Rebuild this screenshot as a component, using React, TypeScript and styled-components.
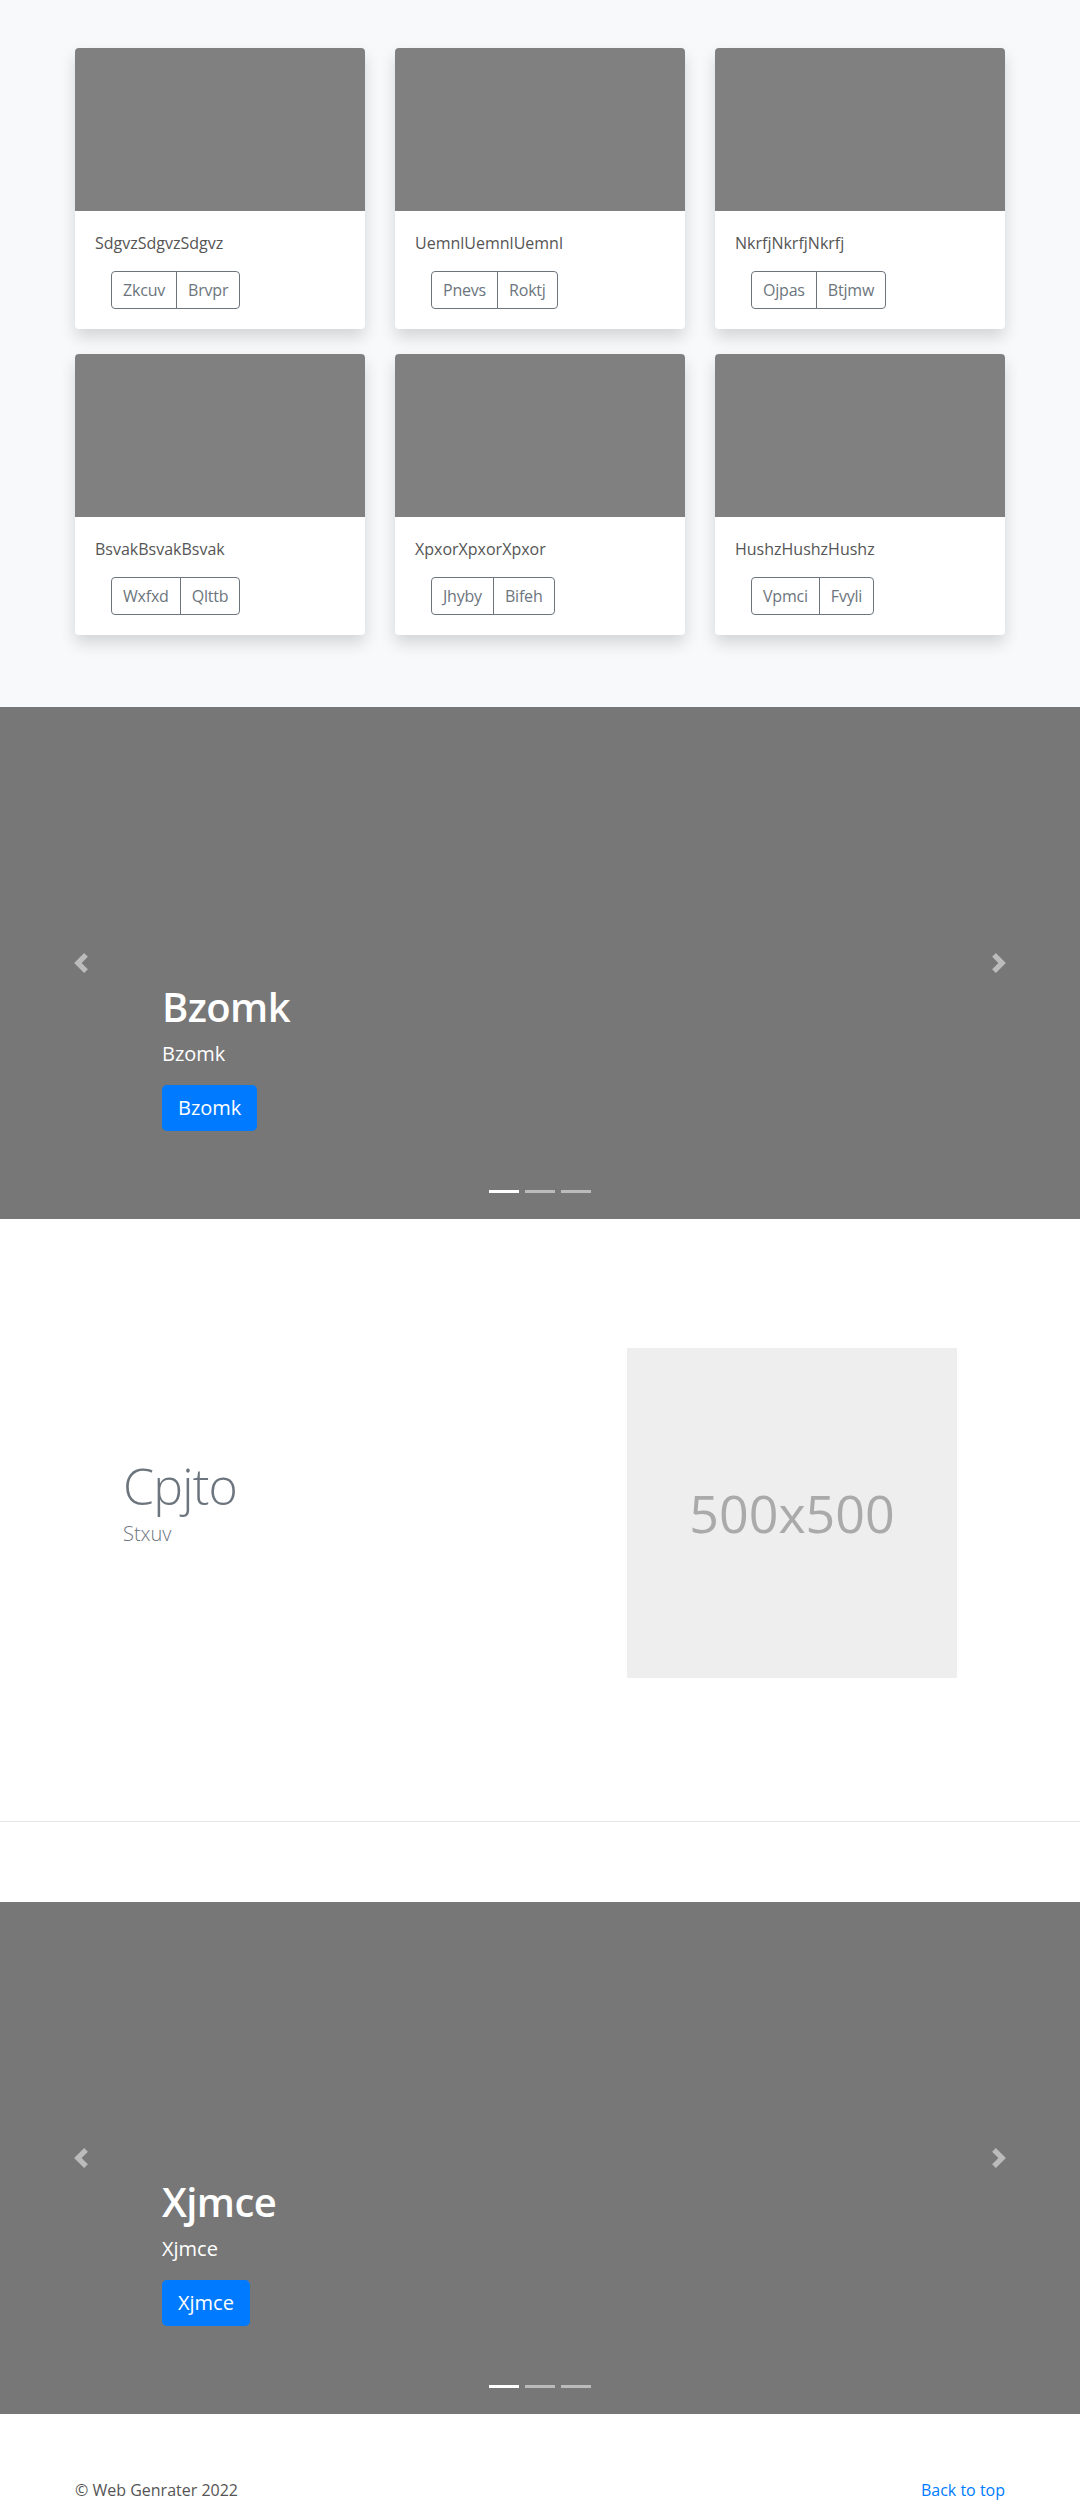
import React from "react";
import styled, { createGlobalStyle } from "styled-components";

const GlobalStyle = createGlobalStyle`
  html, body {
    margin: 0;
    padding: 0;
  }
  body {
    font-family: "Open Sans", "Noto Sans", "Liberation Sans", sans-serif;
    font-size: 16px;
    line-height: 1.5;
    color: #212529;
    background: #fff;
  }
  * {
    box-sizing: border-box;
  }
`;

const Container = styled.div`
  max-width: 960px;
  margin: 0 auto;
  padding: 0 15px;
`;

// album

const Album = styled.section`
  background: #f8f9fa;
  padding: 48px 0 24px;
`;

const CardGrid = styled.div`
  display: grid;
  grid-template-columns: repeat(3, 1fr);
  column-gap: 30px;
  row-gap: 25px;
  padding-bottom: 48px;
`;

const Card = styled.div`
  background: #fff;
  border-radius: 4px;
  overflow: hidden;
  box-shadow: 0 8px 16px rgba(0, 0, 0, 0.15);
`;

const CardImage = styled.div`
  height: 163px;
  background: #808080;
`;

const CardBody = styled.div`
  padding: 20px;
`;

const CardText = styled.p`
  margin: 0 0 16px;
  font-size: 16px;
  line-height: 24px;
  color: #555;
`;

const BtnGroup = styled.div`
  display: inline-flex;
  margin-left: 16px;
`;

const OutlineBtn = styled.button<{ $first?: boolean }>`
  font-family: inherit;
  font-size: 16px;
  line-height: 24px;
  height: 38px;
  padding: 6px 11px;
  letter-spacing: -0.2px;
  background: transparent;
  color: #6c757d;
  border: 1px solid #6c757d;
  border-radius: ${(p) => (p.$first ? "4px 0 0 4px" : "0 4px 4px 0")};
  margin-left: ${(p) => (p.$first ? "0" : "-1px")};
  cursor: pointer;
`;

// carousel

const CarouselBox = styled.div`
  position: relative;
  height: 512px;
  background: #777;
  overflow: hidden;
`;

const Slide = styled.div`
  height: 100%;
  display: flex;
  flex-direction: column;
  justify-content: flex-end;
  align-items: flex-start;
  padding: 0 15% 88px;
  color: #fff;
`;

const SlideTitle = styled.h1`
  margin: 0 0 8px;
  font-size: 40px;
  font-weight: 600;
  line-height: 1.2;
  letter-spacing: -0.6px;
`;

const SlideText = styled.p`
  margin: 0 0 16px;
  font-size: 20px;
  line-height: 30px;
`;

const PrimaryBtn = styled.a`
  display: inline-block;
  padding: 8px 16px;
  font-size: 20px;
  line-height: 30px;
  color: #fff;
  background: #007bff;
  border-radius: 4.8px;
  text-decoration: none;
`;

const Control = styled.div<{ $side: "left" | "right" }>`
  position: absolute;
  top: 0;
  bottom: 0;
  ${(p) => p.$side}: 0;
  width: 15%;
  display: flex;
  align-items: center;
  justify-content: center;
  opacity: 0.5;
  cursor: pointer;
`;

const Indicators = styled.ol`
  position: absolute;
  left: 0;
  right: 0;
  bottom: 16px;
  margin: 0;
  padding: 0;
  list-style: none;
  display: flex;
  justify-content: center;
`;

const Dot = styled.li<{ $active?: boolean }>`
  width: 30px;
  height: 3px;
  margin: 0 3px 10px;
  background: ${(p) => (p.$active ? "#fff" : "rgba(255, 255, 255, 0.5)")};
`;

const Arrow = ({ dir }: { dir: "prev" | "next" }) => (
  <svg width="20" height="20" viewBox="0 0 8 8" fill="#fff">
    {dir === "prev" ? (
      <path d="M5.25 0l-4 4 4 4 1.5-1.5L4.25 4l2.5-2.5L5.25 0z" />
    ) : (
      <path d="M2.75 0l-1.5 1.5L3.75 4l-2.5 2.5L2.75 8l4-4-4-4z" />
    )}
  </svg>
);

function Carousel(props: any) {
  const { title } = props;
  return (
    <CarouselBox>
      <Slide>
        <SlideTitle>{title}</SlideTitle>
        <SlideText>{title}</SlideText>
        <PrimaryBtn href="#">{title}</PrimaryBtn>
      </Slide>
      <Control $side="left">
        <Arrow dir="prev" />
      </Control>
      <Control $side="right">
        <Arrow dir="next" />
      </Control>
      <Indicators>
        <Dot $active />
        <Dot />
        <Dot />
      </Indicators>
    </CarouselBox>
  );
}

// featurette

const Feature = styled.section`
  padding: 129px 0 63px;
`;

const FeatureRow = styled.div`
  display: grid;
  grid-template-columns: 1fr 330px;
  column-gap: 30px;
  align-items: center;
  padding: 0 48px;
`;

const FeatureHeading = styled.h2`
  margin: 0 0 8px;
  font-size: 50px;
  font-weight: 300;
  line-height: 1;
  letter-spacing: -0.8px;
  color: #6c757d;
`;

const FeatureLead = styled.p`
  margin: 0 0 16px;
  font-size: 20px;
  font-weight: 300;
  line-height: 30px;
  color: #6c757d;
`;

const Placeholder = styled.div`
  width: 330px;
  height: 330px;
  background: #eee;
  color: #aaa;
  display: flex;
  align-items: center;
  justify-content: center;
  font-size: 52px;
`;

const Divider = styled.hr`
  margin: 80px 0;
  border: 0;
  border-top: 1px solid rgba(0, 0, 0, 0.1);
`;

// footer

const Footer = styled.footer`
  margin-top: 64px;
`;

const FooterRow = styled.div`
  display: flex;
  justify-content: space-between;
  line-height: 24px;
  color: #555;
`;

const FooterLink = styled.a`
  color: #007bff;
  text-decoration: none;
`;

const cards = [
  { text: "SdgvzSdgvzSdgvz", a: "Zkcuv", b: "Brvpr" },
  { text: "UemnlUemnlUemnl", a: "Pnevs", b: "Roktj" },
  { text: "NkrfjNkrfjNkrfj", a: "Ojpas", b: "Btjmw" },
  { text: "BsvakBsvakBsvak", a: "Wxfxd", b: "Qlttb" },
  { text: "XpxorXpxorXpxor", a: "Jhyby", b: "Bifeh" },
  { text: "HushzHushzHushz", a: "Vpmci", b: "Fvyli" },
];

export default function App() {
  return (
    <>
      <GlobalStyle />
      <Album>
        <Container>
          <CardGrid>
            {cards.map((item, idx) => (
              <Card key={idx}>
                <CardImage />
                <CardBody>
                  <CardText>{item.text}</CardText>
                  <BtnGroup>
                    <OutlineBtn $first>{item.a}</OutlineBtn>
                    <OutlineBtn>{item.b}</OutlineBtn>
                  </BtnGroup>
                </CardBody>
              </Card>
            ))}
          </CardGrid>
        </Container>
      </Album>

      <Carousel title="Bzomk" />

      <Feature>
        <Container>
          <FeatureRow>
            <div>
              <FeatureHeading>Cpjto</FeatureHeading>
              <FeatureLead>Stxuv</FeatureLead>
            </div>
            <Placeholder>500x500</Placeholder>
          </FeatureRow>
        </Container>
      </Feature>
      <Divider />

      <Carousel title="Xjmce" />

      <Footer>
        <Container>
          <FooterRow>
            <span>© Web Genrater 2022</span>
            <FooterLink href="#">Back to top</FooterLink>
          </FooterRow>
        </Container>
      </Footer>
    </>
  );
}
